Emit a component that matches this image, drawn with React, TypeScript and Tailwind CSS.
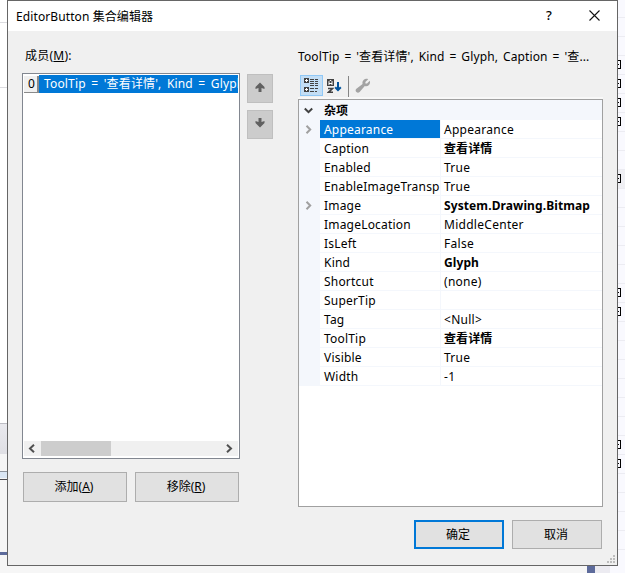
import React from 'react';

interface Property {
    name: string;
    value: string;
    bold?: boolean;
    expandable?: boolean;
    selected?: boolean;
}

const properties: Property[] = [
    { name: 'Appearance', value: 'Appearance', expandable: true, selected: true },
    { name: 'Caption', value: '查看详情', bold: true },
    { name: 'Enabled', value: 'True' },
    { name: 'EnableImageTransp', value: 'True' },
    { name: 'Image', value: 'System.Drawing.Bitmap', bold: true, expandable: true },
    { name: 'ImageLocation', value: 'MiddleCenter' },
    { name: 'IsLeft', value: 'False' },
    { name: 'Kind', value: 'Glyph', bold: true },
    { name: 'Shortcut', value: '(none)' },
    { name: 'SuperTip', value: '' },
    { name: 'Tag', value: '<Null>' },
    { name: 'ToolTip', value: '查看详情', bold: true },
    { name: 'Visible', value: 'True' },
    { name: 'Width', value: '-1' },
];

// Rows of the owner window that show an expander next to the dialog
const expanderRows = [2, 3, 4, 5, 8, 14, 15, 22, 23];

const Chevron = ({ className, d }: { className?: string; d: string }) => (
    <svg className={className} width="9" height="9" viewBox="0 0 9 9" fill="none" stroke="currentColor" strokeWidth="2">
        <path d={d} />
    </svg>
);

const MoveArrow = ({ down }: { down?: boolean }) => (
    <button className="flex h-[29px] w-[26px] items-center justify-center border border-[#bfbfbf] bg-[#cccccc] pb-[3px] text-[#606060]">
        <svg width="10" height="10" viewBox="0 0 10 10" fill="currentColor">
            <path d={down ? 'M3.5 0h3v4L9.5 3v2L5 9.5.5 5V3l3 1z' : 'M3.5 10h3V6l3 1V5L5 .5.5 5v2l3-1z'} />
        </svg>
    </button>
);

const PushButton = ({ className, children }: { className: string; children: React.ReactNode }) => (
    <button className={`flex items-center justify-center bg-[#e1e1e1] pr-[2px] ${className}`}>
        <span className="whitespace-nowrap">{children}</span>
    </button>
);

const OwnerLeft = () => (
    <div className="flex h-full w-[7px] flex-none flex-col bg-white">
        <div className="h-[22px]" />
        <div className="h-px bg-[#dcdce0]" />
        <div className="h-16" />
        <div className="h-px bg-[#dcdce0]" />
        <div className="h-[335px]" />
        <div className="h-px bg-[#bdbdc4]" />
        <div className="h-[30px] bg-gradient-to-b from-[#e9e9ee] to-[#dfdfe4]" />
        <div className="h-[17px] bg-[#f5f5f5]" />
        <div className="h-px bg-[#8e949e]" />
        <div className="h-[6px] bg-[#d9e5f3]" />
        <div className="h-px bg-[#f5f5f5]" />
        <div className="h-px bg-[#4b4b50]" />
        <div className="h-[72px] bg-[#f6f6f6]" />
        <div className="h-[3px] bg-[#5d6b9b]" />
        <div className="flex-1 bg-[#f6f6f6]" />
    </div>
);

const OwnerRight = () => (
    <div className="h-full w-[7px] flex-none overflow-hidden bg-[#f9f9fe]">
        <div className="h-[18px] border-b border-[#ececf2]" />
        {Array.from({ length: 29 }, (_, i) => (
            <div key={i} className={`flex h-[19px] items-center border-b border-[#ececf2] pb-[2px] ${i === 8 ? 'bg-[#efeff3]' : ''}`}>
                {expanderRows.includes(i) && (
                    <svg width="3" height="9" viewBox="0 0 3 9" fill="#000" shapeRendering="crispEdges">
                        <path d="M0 0h3v9H0V8h2V1H0zM0 4h1v1H0z" />
                    </svg>
                )}
            </div>
        ))}
    </div>
);

const MemberList = () => (
    <div className="flex h-[386px] w-[218px] flex-col border border-[#828790] bg-white px-px pt-px pb-[2px]">
        <div className="flex h-[18px] w-full">
            <div className="mt-px flex h-[17px] w-[15px] flex-none items-center justify-center border-r-2 border-b border-[#8a8a8a] bg-[#f0f0f0] pb-px pl-[2px]">0</div>
            <div className="flex h-[18px] flex-1 items-center overflow-hidden bg-[#0078d7] pb-[2px] pl-[5px] text-white">
                <span className="whitespace-nowrap tracking-[0.16px] [word-spacing:2.2px]">ToolTip = '查看详情', Kind = Glyph</span>
            </div>
        </div>
        <div className="flex-1" />
        <div className="flex h-[15px] w-full items-center bg-[#f0f0f0] text-[#505050]">
            <div className="flex w-[17px] justify-center pr-[2px]">
                <Chevron d="M7 .8L3 4.5 7 8.2" />
            </div>
            <div className="h-[15px] w-[70px] bg-[#cdcdcd]" />
            <div className="flex-1" />
            <div className="flex w-[17px] justify-center">
                <Chevron d="M2 .8L6 4.5 2 8.2" />
            </div>
        </div>
    </div>
);

const Toolbar = () => (
    <div className="flex h-[22px] pl-[2px]">
        <div className="flex h-[21px] w-[23px] items-center justify-center border border-[#90c8f6] bg-[#c3def5]">
            <svg width="15" height="15" viewBox="0 0 15 15" shapeRendering="crispEdges">
                <path d="M0 0h5v5H0zM0 9h5v5H0z" fill="#424242" />
                <path d="M1 2h3v1H1zM2 1h1v3H2zM1 11h3v1H1zM2 10h1v3H2z" fill="#fff" />
                <path d="M6 1h4v1H6zM11 1h3v1h-3zM6 3h4v1H6zM11 3h3v1h-3zM6 5h4v1H6zM11 5h3v1h-3zM6 7h4v1H6zM11 7h3v1h-3zM6 10h4v1H6zM11 10h3v1h-3zM6 13h4v1H6zM11 13h2v1h-2z" fill="#424242" />
            </svg>
        </div>
        <svg className="mt-[4px] ml-[4px]" width="15" height="15" viewBox="0 0 15 15" fill="none">
            <path d="M0 0h7v7H0z" fill="#424242" />
            <path d="M2 6V2.5L3 1.5h1l1 1V6M2 4.5h3" stroke="#fff" />
            <path d="M1 9.5h4.5L1.5 13.3H6" stroke="#424242" strokeWidth="1.6" />
            <path d="M11 3v8M8.2 8.2L11 11l2.8-2.8" stroke="#00539c" strokeWidth="2" />
        </svg>
        <div className="mt-px ml-[6px] h-[21px] w-px bg-[#858585]" />
        <svg className="mt-[3px] ml-[6px]" width="16" height="16" viewBox="0 0 16 16" fill="#a3a3a3">
            <path d="M13.2 1.2L10.4 4v1.6H12l2.8-2.8c.5 1.5.3 3-.8 4.1-1.2 1.2-2.8 1.5-4.2 1L4.6 14a2.2 2.2 0 0 1-3.2-3.2L7.6 6c-.5-1.4-.1-2.9 1-4C9.8.8 11.7.6 13.2 1.2z" />
        </svg>
    </div>
);

const PropertyGrid = () => (
    <div className="h-[408px] w-[305px] border border-[#a0a0a0] bg-white">
        <div className="flex h-5 items-center bg-[#f4f7fc]">
            <div className="flex w-[21px] justify-center pr-[3px]">
                <Chevron className="text-[#424242]" d="M.8 2.5L4.5 6.2 8.2 2.5" />
            </div>
            <span className="pl-1 font-bold">杂项</span>
        </div>
        {properties.map(property => (
            <div key={property.name} className="flex h-[19px]">
                <div className="flex w-[21px] items-center justify-center bg-[#f4f7fc] pr-[2px]">
                    {property.expandable && <Chevron className="text-[#a0a0a0]" d="M2.5 .8L6.2 4.5 2.5 8.2" />}
                </div>
                <div className={`flex w-[120px] items-center overflow-hidden border-b border-[#f4f7fc] pl-1 ${property.selected ? 'bg-[#0078d7] bg-clip-padding text-white' : ''}`}>
                    <span className="whitespace-nowrap tracking-[0.2px]">{property.name}</span>
                </div>
                <div className={`flex flex-1 items-center border-b border-l border-[#f4f7fc] pl-[3px] whitespace-nowrap ${property.bold ? 'font-bold tracking-[0.1px]' : 'tracking-[0.28px]'}`}>
                    {property.value}
                </div>
            </div>
        ))}
    </div>
);

export default function App() {
    return (
        <div className="flex h-[573px] w-[625px] flex-col overflow-hidden bg-[#f6f6f6] font-['Noto_Sans','Noto_Sans_CJK_SC',sans-serif] text-[12px] leading-[17px] text-black">
            <div className="flex h-[566px]">
                <OwnerLeft />
                <div className="flex w-[611px] flex-none flex-col border border-[#666666] bg-[#f0f0f0]">
                    {/* Title bar */}
                    <div className="flex h-[30px] items-center bg-white pl-2">
                        <span className="flex-1 whitespace-nowrap tracking-[0.1px]">EditorButton 集合编辑器</span>
                        <span className="w-[7px] pb-[2px] text-[13px] font-medium">?</span>
                        <svg className="mr-[17px] mb-[2px] ml-[36px]" width="11" height="11" viewBox="0 0 11 11" stroke="#111" strokeWidth="1.1">
                            <path d="M.5.5l10 10M10.5.5l-10 10" />
                        </svg>
                    </div>

                    <div className="flex h-[476px] pl-[14px]">
                        {/* Members */}
                        <div className="flex w-[218px] flex-col">
                            <div className="flex h-[42px] items-center pt-[7px] pl-[3px]">
                                <span className="tracking-[0.25px]">成员(<span className="underline">M</span>):</span>
                            </div>
                            <MemberList />
                            <div className="mt-[13px] flex gap-2 pl-px">
                                <PushButton className="h-[30px] w-[104px] border border-[#adadad] pb-px">
                                    添加(<span className="underline">A</span>)
                                </PushButton>
                                <PushButton className="h-[30px] w-[104px] border border-[#adadad] pb-px">
                                    移除(<span className="underline">R</span>)
                                </PushButton>
                            </div>
                        </div>

                        <div className="ml-[7px] flex flex-col gap-[7px] pt-[43px]">
                            <MoveArrow />
                            <MoveArrow down />
                        </div>

                        {/* Properties of the selected member */}
                        <div className="ml-[25px] flex w-[305px] flex-col">
                            <div className="flex h-[44px] items-center pt-[6px]">
                                <span className="whitespace-nowrap tracking-[0.12px] [word-spacing:1.7px]">ToolTip = '查看详情', Kind = Glyph, Caption = '查...</span>
                            </div>
                            <Toolbar />
                            <div className="h-[2px] bg-[#f8f8f8]" />
                            <PropertyGrid />
                        </div>
                    </div>

                    <div className="flex flex-1 gap-2 pt-[13px] pl-[406px]">
                        <PushButton className="h-[29px] w-[90px] border-2 border-[#0078d7]">确定</PushButton>
                        <PushButton className="h-[29px] w-[90px] border border-[#adadad]">取消</PushButton>
                        <svg className="mt-auto mb-[2px] -ml-[3px]" width="8" height="8" viewBox="0 0 8 8" fill="#bdbdbd">
                            <path d="M6 0h2v2H6zM3 3h2v2H3zM6 3h2v2H6zM0 6h2v2H0zM3 6h2v2H3zM6 6h2v2H6z" />
                        </svg>
                    </div>
                </div>
                <OwnerRight />
            </div>

            <div className="flex h-[7px]">
                <div className="w-[587px]" />
                <div className="w-2 bg-[#5d6b9b]" />
                <div className="w-[15px] bg-[#ecebf1]" />
                <div className="flex-1 bg-[#f9f9fe]" />
            </div>
        </div>
    );
}
